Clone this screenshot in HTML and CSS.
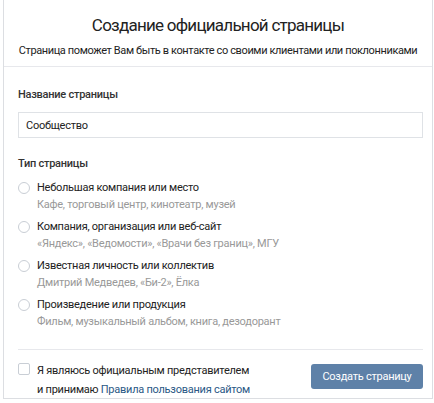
FILE: index.html
```html
<!DOCTYPE html>
<html lang="ru">
<head>
    <meta charset="UTF-8">
    <meta name="viewport" content="width=device-width, initial-scale=1.0">
    <title>Создание официальной страницы</title>
    <link rel="stylesheet" href="styles.css">
</head>
<body>

    <div class="box">
        <!-- Header -->
        <div class="box-head">
            <h1>Создание официальной страницы</h1>
            <p>Страница поможет Вам быть в контакте со своими клиентами или поклонниками</p>
        </div>

        <form class="box-body">
            <label class="field-label" for="pageName">Название страницы</label>
            <input class="text-input" type="text" id="pageName" value="Сообщество">

            <div class="field-label type-label">Тип страницы</div>

            <label class="radio-row">
                <span class="radio"></span>
                <span class="radio-text">
                    <span class="radio-title">Небольшая компания или место</span>
                    <span class="radio-hint">Кафе, торговый центр, кинотеатр, музей</span>
                </span>
            </label>
            <label class="radio-row">
                <span class="radio"></span>
                <span class="radio-text">
                    <span class="radio-title">Компания, организация или веб-сайт</span>
                    <span class="radio-hint">«Яндекс», «Ведомости», «Врачи без границ», МГУ</span>
                </span>
            </label>
            <label class="radio-row">
                <span class="radio"></span>
                <span class="radio-text">
                    <span class="radio-title">Известная личность или коллектив</span>
                    <span class="radio-hint">Дмитрий Медведев, «Би-2», Ёлка</span>
                </span>
            </label>
            <label class="radio-row">
                <span class="radio"></span>
                <span class="radio-text">
                    <span class="radio-title">Произведение или продукция</span>
                    <span class="radio-hint">Фильм, музыкальный альбом, книга, дезодорант</span>
                </span>
            </label>

            <!-- Footer -->
            <div class="box-foot">
                <label class="agree">
                    <span class="checkbox"></span>
                    <span>Я являюсь официальным представителем<br>и принимаю <a href="#">Правила пользования сайтом</a></span>
                </label>
                <button type="button" class="btn">Создать страницу</button>
            </div>
        </form>
    </div>

</body>
</html>
```

FILE: styles.css
```css
/* General Reset */
* {
    margin: 0;
    padding: 0;
    box-sizing: border-box;
}

body {
    background-color: #fff;
    font-family: Roboto, "Open Sans", Arial, sans-serif;
    color: #222;
}

/* Card */
.box {
    width: 430px;
    height: 399px;
    margin-left: 3px;
    border: 1px solid #dcdee2;
    border-top: none;
    background: #fff;
}

.box-head {
    height: 67px;
    border-bottom: 1px solid #e7e8ec;
    text-align: center;
    padding-top: 14px;
}

.box-head h1 {
    font-size: 17px;
    font-weight: 400;
    line-height: 22px;
    letter-spacing: -0.75px;
    color: #222;
}

.box-head p {
    font-size: 11px;
    line-height: 15px;
    margin-top: 7px;
    letter-spacing: -0.38px;
    white-space: nowrap;
    color: #222;
}

.box-body {
    padding: 20px 9px 0 14px;
    letter-spacing: -0.25px;
}

/* Labels and inputs */
.field-label {
    display: block;
    font-size: 11px;
    font-weight: 500;
    color: #333;
    line-height: 16px;
}

.text-input {
    display: block;
    width: 100%;
    height: 26px;
    margin-top: 9px;
    padding: 0 7px;
    border: 1px solid #dfe2e6;
    font-family: inherit;
    font-size: 11px;
    letter-spacing: -0.25px;
    color: #222;
}

.type-label {
    margin-top: 18px;
    margin-bottom: 7px;
}

/* Radio list */
.radio-row {
    display: flex;
    align-items: flex-start;
    margin-bottom: 5px;
}

.radio {
    width: 12px;
    height: 12px;
    border: 1px solid #c9ced5;
    border-radius: 50%;
    margin: 3px 7px 0 0;
    flex-shrink: 0;
}

.radio-text {
    display: flex;
    flex-direction: column;
}

.radio-title {
    font-size: 11px;
    line-height: 17px;
    color: #222;
}

.radio-hint {
    font-size: 11px;
    line-height: 17px;
    color: #999;
}

/* Footer */
.box-foot {
    display: flex;
    justify-content: space-between;
    align-items: flex-start;
    margin-top: 19px;
    padding-top: 11px;
    border-top: 1px solid #e7e8ec;
}

.agree {
    display: flex;
    font-size: 11px;
    line-height: 19px;
    color: #222;
}

.checkbox {
    width: 12px;
    height: 12px;
    border: 1px solid #c9ced5;
    border-radius: 2px;
    margin: 2px 7px 0 0;
    flex-shrink: 0;
}

.agree a {
    color: #2a5885;
    text-decoration: none;
}

.btn {
    width: 112px;
    height: 25px;
    margin-top: 3px;
    background-color: #5e81a8;
    color: #fff;
    border: none;
    border-radius: 3px;
    font-family: inherit;
    font-size: 11px;
    letter-spacing: -0.25px;
    cursor: pointer;
}
```
